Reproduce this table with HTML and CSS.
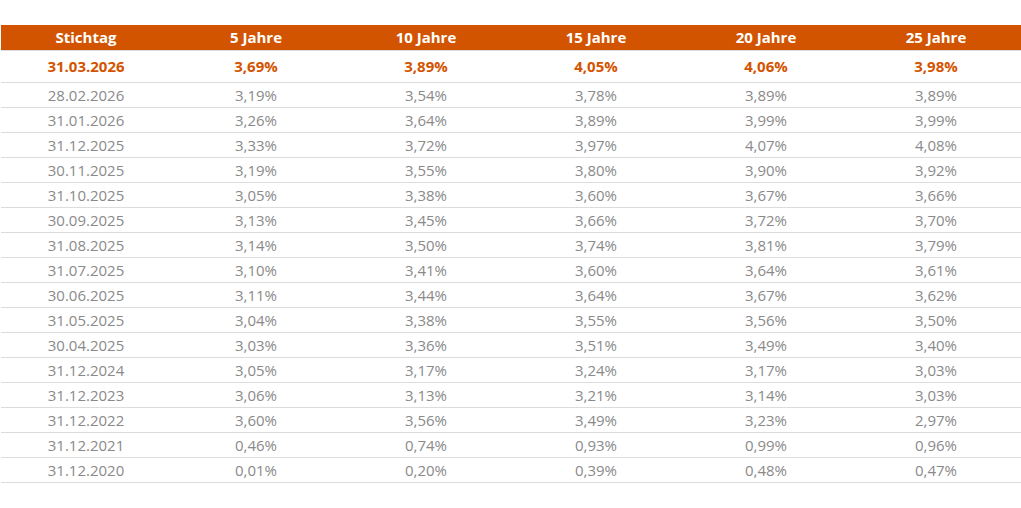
FILE: index.html
```html
<!DOCTYPE html>
<html lang="de">
<head>
<meta charset="utf-8">
<title>Zinssätze</title>
<link rel="stylesheet" href="styles.css">
</head>
<body>
<div class="wrap">
<table class="rates">
<thead>
<tr><th>Stichtag</th><th>5 Jahre</th><th>10 Jahre</th><th>15 Jahre</th><th>20 Jahre</th><th>25 Jahre</th></tr>
</thead>
<tbody>
<tr class="current"><td>31.03.2026</td><td>3,69%</td><td>3,89%</td><td>4,05%</td><td>4,06%</td><td>3,98%</td></tr>
<tr><td>28.02.2026</td><td>3,19%</td><td>3,54%</td><td>3,78%</td><td>3,89%</td><td>3,89%</td></tr>
<tr><td>31.01.2026</td><td>3,26%</td><td>3,64%</td><td>3,89%</td><td>3,99%</td><td>3,99%</td></tr>
<tr><td>31.12.2025</td><td>3,33%</td><td>3,72%</td><td>3,97%</td><td>4,07%</td><td>4,08%</td></tr>
<tr><td>30.11.2025</td><td>3,19%</td><td>3,55%</td><td>3,80%</td><td>3,90%</td><td>3,92%</td></tr>
<tr><td>31.10.2025</td><td>3,05%</td><td>3,38%</td><td>3,60%</td><td>3,67%</td><td>3,66%</td></tr>
<tr><td>30.09.2025</td><td>3,13%</td><td>3,45%</td><td>3,66%</td><td>3,72%</td><td>3,70%</td></tr>
<tr><td>31.08.2025</td><td>3,14%</td><td>3,50%</td><td>3,74%</td><td>3,81%</td><td>3,79%</td></tr>
<tr><td>31.07.2025</td><td>3,10%</td><td>3,41%</td><td>3,60%</td><td>3,64%</td><td>3,61%</td></tr>
<tr><td>30.06.2025</td><td>3,11%</td><td>3,44%</td><td>3,64%</td><td>3,67%</td><td>3,62%</td></tr>
<tr><td>31.05.2025</td><td>3,04%</td><td>3,38%</td><td>3,55%</td><td>3,56%</td><td>3,50%</td></tr>
<tr><td>30.04.2025</td><td>3,03%</td><td>3,36%</td><td>3,51%</td><td>3,49%</td><td>3,40%</td></tr>
<tr><td>31.12.2024</td><td>3,05%</td><td>3,17%</td><td>3,24%</td><td>3,17%</td><td>3,03%</td></tr>
<tr><td>31.12.2023</td><td>3,06%</td><td>3,13%</td><td>3,21%</td><td>3,14%</td><td>3,03%</td></tr>
<tr><td>31.12.2022</td><td>3,60%</td><td>3,56%</td><td>3,49%</td><td>3,23%</td><td>2,97%</td></tr>
<tr><td>31.12.2021</td><td>0,46%</td><td>0,74%</td><td>0,93%</td><td>0,99%</td><td>0,96%</td></tr>
<tr><td>31.12.2020</td><td>0,01%</td><td>0,20%</td><td>0,39%</td><td>0,48%</td><td>0,47%</td></tr>
</tbody>
</table>
</div>
</body>
</html>
```
FILE: styles.css
```css
html, body {
  margin: 0;
  padding: 0;
  background: #ffffff;
}
body {
  font-family: "Open Sans", "Liberation Sans", sans-serif;
}
.wrap {
  padding: 25px 0 0 1px;
}
.rates {
  width: 1020px;
  border-collapse: collapse;
  table-layout: fixed;
}
.rates th,
.rates td {
  text-align: center;
  padding: 0;
  border-bottom: 1px solid #dcdcdc;
}
.rates th {
  background: #d35400;
  color: #ffffff;
  font-weight: 700;
  font-size: 15px;
  height: 25px;
  line-height: 25px;
}
.rates td {
  color: #8a8a8a;
  font-size: 15px;
  height: 24px;
  line-height: 24px;
}
.rates tr.current td {
  color: #d35400;
  font-weight: 700;
  height: 31px;
  line-height: 31px;
}
```
